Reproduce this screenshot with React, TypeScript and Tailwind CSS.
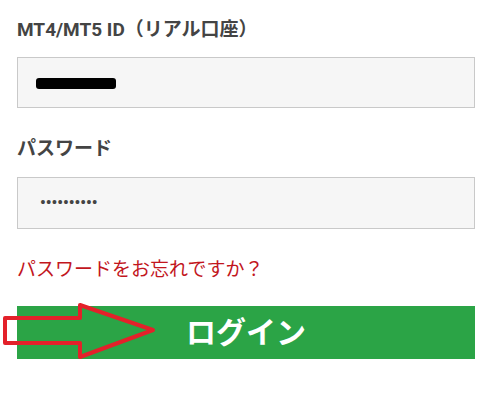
export default function App() {
  return (
    <div
      className="w-[496px] h-[403px] bg-white pl-[17px] pr-[21px] pt-[18px]"
      style={{ fontFamily: "Roboto, 'Noto Sans CJK JP', sans-serif" }}
    >
      <label className="block text-[19px] leading-[24px] font-bold text-[#444444]">
        MT4/MT5 ID（リアル口座）
      </label>
      <div className="mt-[15px] h-[51px] border border-[#c9c9c9] bg-[#f6f6f6] flex items-center pl-[18px]">
        <span className="inline-block w-[80px] h-[11px] mt-[2px] rounded-[3px] bg-black" />
      </div>

      <label className="block mt-[29px] text-[19px] leading-[24px] font-bold text-[#444444]">
        パスワード
      </label>
      <div className="mt-[16px] h-[52px] border border-[#c9c9c9] bg-[#f6f6f6] flex items-center pl-[22px]">
        <span className="text-[16px] font-bold text-[#444444]">••••••••••</span>
      </div>

      <a href="#" className="block mt-[29px] text-[19px] leading-[24px] text-[#c2161d]">
        パスワードをお忘れですか？
      </a>

      <div className="relative mt-[24px]">
        <button className="w-full h-[53px] bg-[#2ba446] text-white text-[30px] font-bold flex items-center justify-center">
          ログイン
        </button>
        {/* red arrow drawn over the button */}
        <svg
          className="absolute left-[-17px] top-[-10px] pointer-events-none"
          width="170"
          height="70"
          viewBox="0 0 170 70"
        >
          <polygon
            points="5,22 80,22 80,9 153,34 80,61 80,47 5,47"
            fill="none"
            stroke="#e3212a"
            strokeWidth="4"
            strokeLinejoin="round"
          />
        </svg>
      </div>
    </div>
  );
}
